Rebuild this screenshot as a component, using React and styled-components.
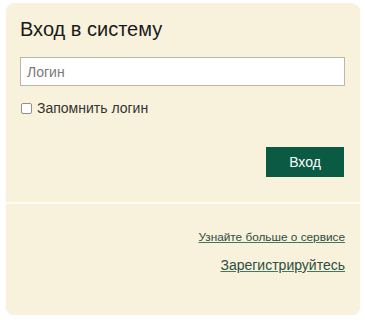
import React from 'react';
import styled, { createGlobalStyle } from 'styled-components';

const Global = createGlobalStyle`
  body {
    margin: 0;
    background: #fff;
    font-family: "Liberation Sans", Arial, sans-serif;
  }
`;

const Card = styled.div`
  margin: 3px 0 0 6px;
  width: 354px;
  border-radius: 9px;
  overflow: hidden;
  background: #f8f2dc;
  box-shadow: 0 1px 2px rgba(0, 0, 0, 0.06);
`;

const Section = styled.div`
  background: #f8f2dc;
  padding: ${p => p.pad};
  display: flex;
  flex-direction: column;
`;

const Divider = styled.div`
  height: 2px;
  background: #fdfbf4;
`;

const Title = styled.h1`
  margin: 0;
  font-size: 20px;
  font-weight: normal;
  line-height: 24px;
  color: #1a1a1a;
`;

const Input = styled.input`
  box-sizing: border-box;
  margin-top: 16px;
  width: 325px;
  height: 29px;
  padding: 0 6px;
  border: 1px solid #b9b6ad;
  background: #fff;
  font-family: inherit;
  font-size: 14px;
  color: #333;
  outline: none;
  &::placeholder {
    color: #7a7a7a;
  }
`;

const CheckRow = styled.label`
  display: flex;
  align-items: center;
  gap: 5px;
  margin-top: 14px;
  font-size: 14px;
  color: #333;
`;

const Box = styled.span`
  box-sizing: border-box;
  width: 11px;
  height: 11px;
  border: 1px solid #8f8f8f;
  border-radius: 2px;
  background: #fff;
  margin-left: 1px;
`;

const Actions = styled.div`
  display: flex;
  justify-content: flex-end;
  margin-top: 31px;
  padding-right: 1px;
`;

const Button = styled.button`
  width: 78px;
  height: 30px;
  border: none;
  background: #0b5a43;
  color: #fff;
  font-family: inherit;
  font-size: 14px;
  cursor: pointer;
`;

const Link = styled.a`
  align-self: flex-end;
  color: #2e4d40;
  text-decoration: underline;
  text-decoration-color: #3f7a60;
  font-size: ${p => p.size}px;
  margin-top: ${p => p.top}px;
  line-height: 16px;
`;

export default function App() {
  return (
    <>
      <Global />
      <Card>
        <Section pad="14px 15px 25px 14px">
          <Title>Вход в систему</Title>
          <Input placeholder="Логин" />
          <CheckRow>
            <Box />
            Запомнить логин
          </CheckRow>
          <Actions>
            <Button>Вход</Button>
          </Actions>
        </Section>
        <Divider />
        <Section pad="25px 15px 42px 14px">
          <Link href="#" size={11.8}>Узнайте больше о сервисе</Link>
          <Link href="#" size={14} top={12}>Зарегистрируйтесь</Link>
        </Section>
      </Card>
    </>
  );
}
